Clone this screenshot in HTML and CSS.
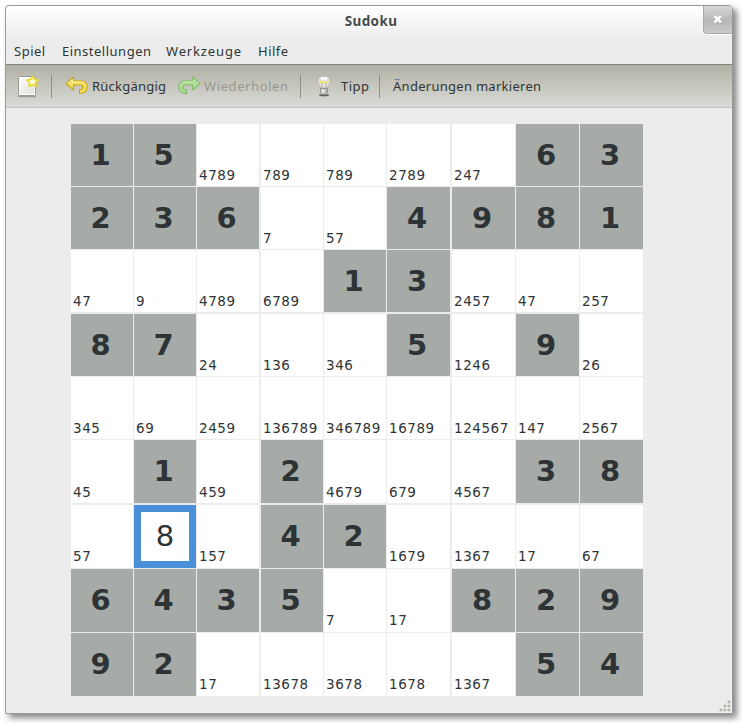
FILE: index.html
```html
<!DOCTYPE html>
<html lang="de">
<head>
<meta charset="utf-8">
<title>Sudoku</title>
<link rel="stylesheet" href="styles.css">
</head>
<body>
<div class="window">
  <header class="titlebar"><h1>Sudoku</h1>
    <button class="close" aria-label="Schließen"><svg width="10" height="11" viewBox="0 0 10 11"><path d="M2 3.500 8 9.500M8 3.500 2 9.500" stroke="#888" stroke-width="2.400" opacity=".5"/><path d="M1.500 2 8 8.500M8 2 1.500 8.500" stroke="#fff" stroke-width="2.600"/></svg></button>
  </header>
  <nav class="menu"><span class="m1">Spiel</span><span class="m2">Einstellungen</span><span class="m3">Werkzeuge</span><span class="m4">Hilfe</span></nav>
  <div class="toolbar">
    <svg class="i-new" width="24" height="24" viewBox="0 0 24 24">
      <defs><linearGradient id="paper" x2="1" y2="1"><stop stop-color="#fff"/><stop offset="1" stop-color="#deded9"/></linearGradient></defs>
      <path d="M2 22.500H20" stroke="#85857c" stroke-width="1.500" opacity=".7"/>
      <rect x="2.500" y="2.500" width="17" height="19" rx="1" fill="url(#paper)" stroke="#999991"/>
      <rect x="3.500" y="3.500" width="15" height="17" fill="none" stroke="#fff"/>
      <path d="m16.500 2.500 1.700 3 3.800.5-2.700 2.600.7 3.600-3.500-1.700-3.500 1.700.7-3.600L11 6l3.800-.5z" fill="#fffef0" stroke="#f1dc22" stroke-width="1.700" stroke-linejoin="round"/>
    </svg>
    <i class="sep"></i>
    <svg class="i-undo" width="24" height="20" viewBox="0 0 24 20">
      <path d="M1 7.600 8.500 1v3.800h6.700c4.700 0 7 2.500 7 6.300 0 4-2.700 6.400-7.700 6.600v-3.900c2.500 0 3.500-1 3.500-2.500 0-1.400-1-2.300-3.100-2.300H8.500V14z" fill="#f2dc5c" stroke="#c9a70f" stroke-width="1.100" stroke-linejoin="round"/>
      <path d="M3 7.500 7.500 3.500v2.500h7.800c3.700 0 5.500 1.900 5.500 5" fill="none" stroke="#fff7b8" stroke-width="1"/>
    </svg>
    <span class="undo">Rückgängig</span>
    <svg class="i-redo" width="24" height="20" viewBox="0 0 24 20">
      <g transform="matrix(-1 0 0 1 24 0)"><path d="M1 7.600 8.500 1v3.800h6.700c4.700 0 7 2.500 7 6.300 0 4-2.700 6.400-7.700 6.600v-3.900c2.500 0 3.500-1 3.500-2.500 0-1.400-1-2.300-3.100-2.300H8.500V14z" fill="#addc94" stroke="#86b967" stroke-width="1.100" stroke-linejoin="round"/>
      <path d="M3 7.500 7.500 3.500v2.500h7.800c3.700 0 5.500 1.900 5.500 5" fill="none" stroke="#caeab8"/></g>
    </svg>
    <span class="redo">Wiederholen</span>
    <i class="sep"></i>
    <svg class="i-bulb" width="16" height="22" viewBox="0 0 16 22">
      <ellipse cx="8" cy="20.200" rx="5" ry="1" fill="#44443d" opacity=".8"/>
      <path d="M8 1C4 1 1.700 3 1.700 6.200c0 2.600 2.300 4 3 6.800h6.600c.7-2.800 3-4.200 3-6.800C14.300 3 12 1 8 1z" fill="#e4e4df" stroke="#b5b5ac"/>
      <path d="M4 5.500 5.500 7.500h5L12 5.500" fill="none" stroke="#f0e065" stroke-width="1.600"/><path d="M6 8v4.500M10 8v4.500" stroke="#aaa"/><path d="M5 3.500h6" stroke="#fff" stroke-width="2"/>
      <path d="M4.500 13.500h7V18l-2 1.500h-3L4.500 18z" fill="#b9b9b4" stroke="#86867f" stroke-width=".8"/><path d="M5 15h4M5 17h4" stroke="#fff"/>
    </svg>
    <span class="tip">Tipp</span>
    <i class="sep"></i>
    <span class="mark">Änderungen markieren</span>
  </div>
  <main class="board">
    <b>1</b><b>5</b><span>4789</span><span>789</span><span>789</span><span>2789</span><span>247</span><b>6</b><b>3</b>
    <b>2</b><b>3</b><b>6</b><span>7</span><span>57</span><b>4</b><b>9</b><b>8</b><b>1</b>
    <span>47</span><span>9</span><span>4789</span><span>6789</span><b>1</b><b>3</b><span>2457</span><span>47</span><span>257</span>
    <b>8</b><b>7</b><span>24</span><span>136</span><span>346</span><b>5</b><span>1246</span><b>9</b><span>26</span>
    <span>345</span><span>69</span><span>2459</span><span>136789</span><span>346789</span><span>16789</span><span>124567</span><span>147</span><span>2567</span>
    <span>45</span><b>1</b><span>459</span><b>2</b><span>4679</span><span>679</span><span>4567</span><b>3</b><b>8</b>
    <span>57</span><b class="selected">8</b><span>157</span><b>4</b><b>2</b><span>1679</span><span>1367</span><span>17</span><span>67</span>
    <b>6</b><b>4</b><b>3</b><b>5</b><span>7</span><span>17</span><b>8</b><b>2</b><b>9</b>
    <b>9</b><b>2</b><span>17</span><span>13678</span><span>3678</span><span>1678</span><span>1367</span><b>5</b><b>4</b>
  </main>
  <svg class="grip" width="12" height="12" viewBox="0 0 12 12"><g fill="#fff"><circle cx="10.500" cy="2.500" r="1.500"/><circle cx="6.500" cy="6.500" r="1.500"/><circle cx="10.500" cy="6.500" r="1.500"/><circle cx="2.500" cy="10.500" r="1.500"/><circle cx="6.500" cy="10.500" r="1.500"/><circle cx="10.500" cy="10.500" r="1.500"/></g><g fill="#b5b6aa"><circle cx="10" cy="2" r="1.600"/><circle cx="6" cy="6" r="1.600"/><circle cx="10" cy="6" r="1.600"/><circle cx="2" cy="10" r="1.600"/><circle cx="6" cy="10" r="1.600"/><circle cx="10" cy="10" r="1.600"/></g></svg>
</div>
</body>
</html>
```

FILE: styles.css
```css
* { box-sizing: border-box; }
body { margin: 0; padding: 5px; height: 723px; background: #fff; overflow: hidden; color: #2e3436; font: 14px "Noto Sans", sans-serif; }
.window { position: relative; width: 728px; height: 709px; border: 1px solid #999; border-radius: 4px 4px 0 0; background: linear-gradient(#fff, #ececec 34px); box-shadow: 4px 4px 6px rgba(0,0,0,.48); }
.titlebar { position: relative; height: 30px; }
h1 { margin: 0; padding-left: 4px; text-align: center; font-size: 13.500px; line-height: 30px; letter-spacing: .4px; color: #454b4c; text-shadow: 0 1px #fff; }
.close { position: absolute; right: 0; top: 0; width: 29px; height: 28px; padding: 0; display: grid; place-items: center; border: solid #a9a9a9; border-width: 0 0 1px 1px; border-radius: 0 3px 0 4px; background: linear-gradient(#d6d6d6, #b7b7b7 55%, #cbcbcb); box-shadow: 0 1px #fff; }
.menu { display: flex; height: 28px; padding-left: 8px; line-height: 30px; font-size: 13px; letter-spacing: .5px; white-space: nowrap; }
.m1 { width: 48px; }
.m2 { width: 104px; }
.m3 { width: 92px; letter-spacing: .85px; }
.toolbar { display: flex; align-items: center; height: 44px; border-top: 1px solid #858585; border-bottom: 1px solid #c0c0bd; background: linear-gradient(#b2b1a5, #dadbd7); font-size: 13px; letter-spacing: .22px; white-space: nowrap; }
.toolbar svg { flex: none; }
.i-new { margin-left: 10px; }
.sep { width: 1px; height: 23px; background: #8c8d85; flex: none; }
.i-new + .sep { margin-left: 11px; }
.i-undo { margin-left: 13px; }
.undo { width: 85px; margin-left: 3px; }
.i-redo { margin-left: 0; }
.redo { width: 96px; margin-left: 3px; letter-spacing: .6px; color: #969790; }
.i-bulb { margin-left: 15px; }
.tip { width: 38px; margin-left: 9px; letter-spacing: .5px; }
.mark { margin-left: 13px; letter-spacing: .28px; }
.board { display: grid; grid-template: 62px 62px 63px 62px 62px 64px 63px 63px 63px / 62px 62px 63px 62px 62px 64px 63px 63px 63px; gap: 1px; width: 572px; margin: 16px 0 0 65px; }
.board span { display: flex; align-items: flex-end; padding: 0 0 3px 2px; background: #fff; font: 13.500px/16px "DejaVu Sans", sans-serif; letter-spacing: .55px; }
.board b { display: grid; place-items: center; padding-right: 3px; background: #a6aba7; font: bold 29px/1 "DejaVu Sans", sans-serif; }
.board > :nth-child(9n+3), .board > :nth-child(9n+6) { margin-right: 1px; }
.board > :nth-child(n+19):nth-child(-n+27), .board > :nth-child(n+46):nth-child(-n+54) { margin-bottom: 1px; }
.board > span:nth-child(n+55) { padding-bottom: 4px; }
.board .selected { padding: 0; border: 7px solid #4a90d9; background: #fff; font-weight: normal; }
.grip { position: absolute; right: 1px; bottom: 1px; }
```
